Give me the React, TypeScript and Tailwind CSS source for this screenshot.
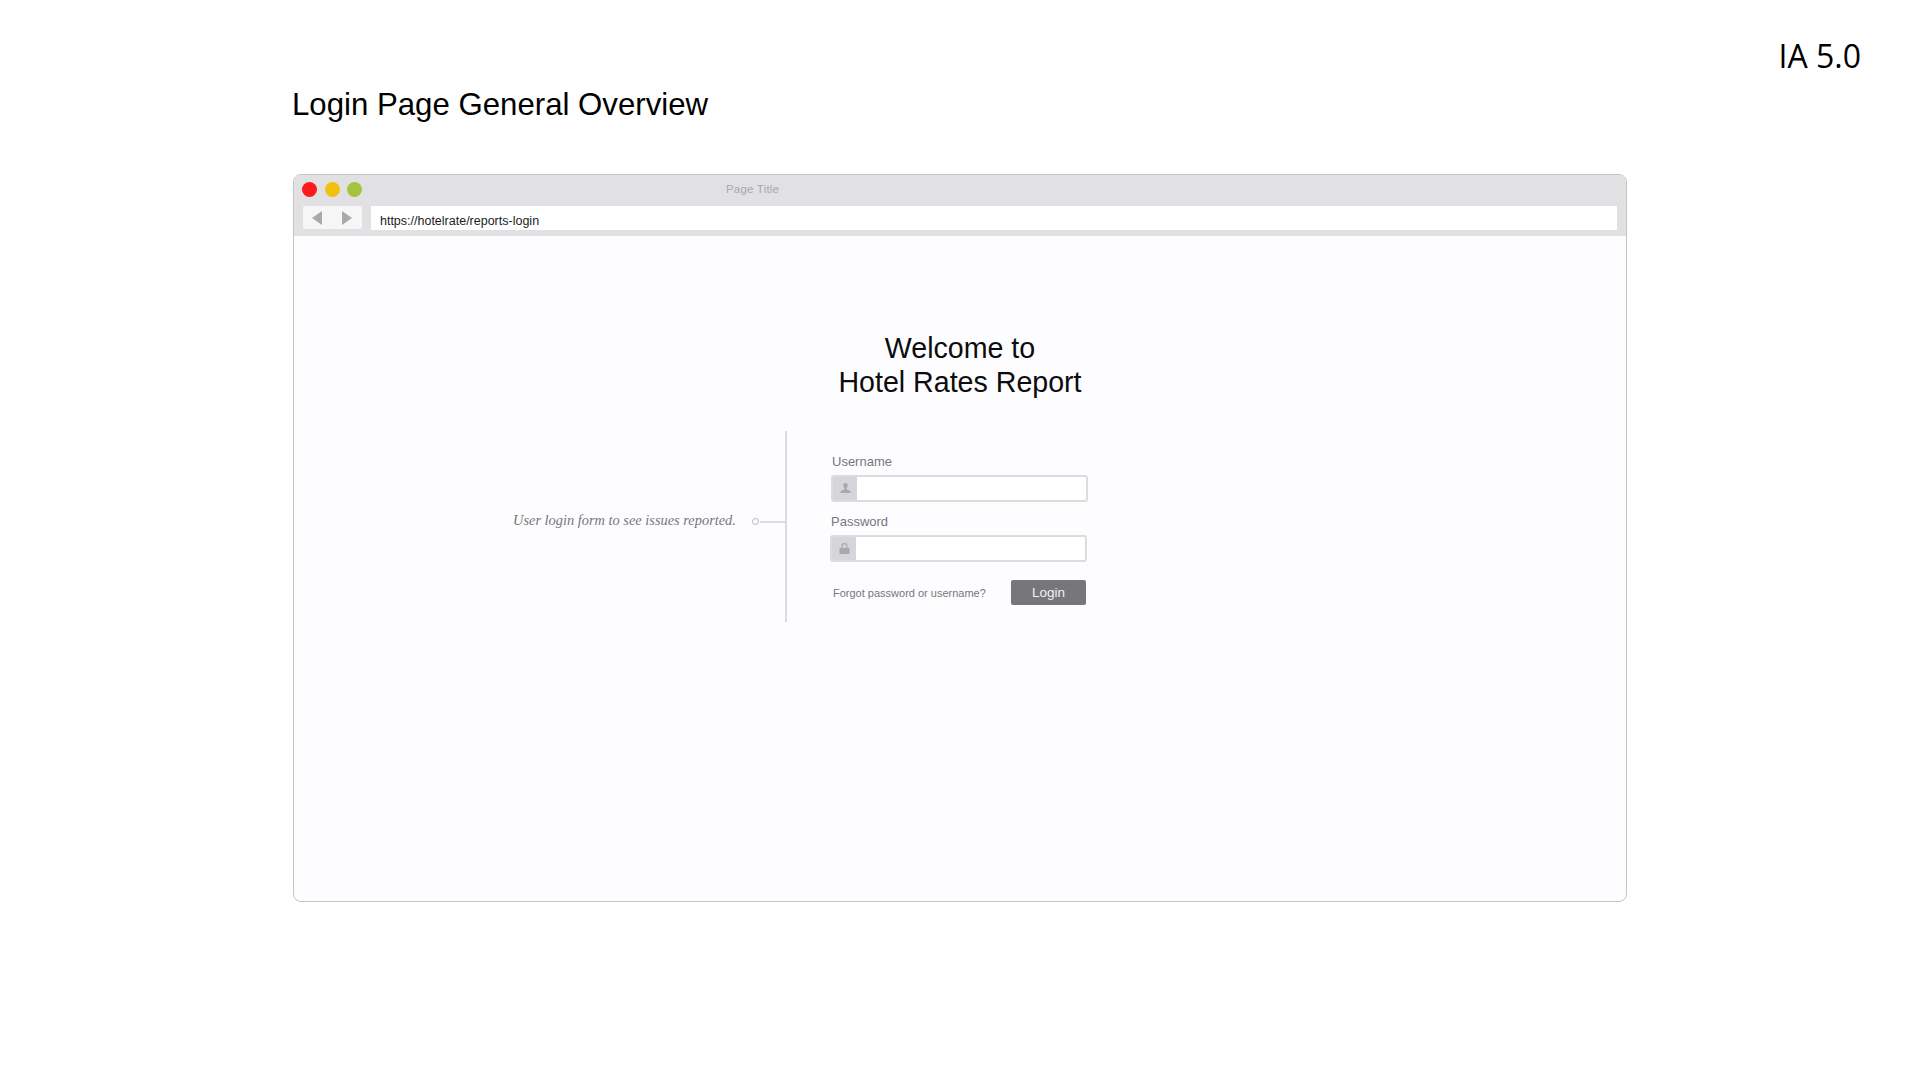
const sans = "font-['Liberation_Sans',Arial,sans-serif]";

function TextField({ icon, className }: { icon: React.ReactNode; className: string }) {
  return (
    <div className={`flex h-[27px] w-[257px] rounded-[3px] border-2 border-[#dcdbde] bg-white overflow-hidden ${className}`}>
      <div className="flex w-[24px] items-center justify-center bg-[#d6d5da] text-[#a9a8ad]">{icon}</div>
    </div>
  );
}

function UserIcon() {
  return (
    <svg width="11" height="11" viewBox="0 0 11 11" fill="currentColor">
      <path d="M5.5 0C4 0 3.3 1 3.3 2.4c0 1 .4 2 1.1 2.6v1.2L.5 8.2V10h10V8.2L6.6 6.2V5c.7-.6 1.1-1.600 1.100-2.600C7.700 1 7 0 5.500 0z" />
    </svg>
  );
}

function LockIcon() {
  return (
    <svg width="11" height="12" viewBox="0 0 11 12" fill="currentColor">
      <path d="M5.500 0C3.700 0 2.500 1.200 2.500 3v2H.500v6h10V5h-2V3c0-1.800-1.200-3-3-3zm0 1.200C6.600 1.200 7.300 2 7.300 3v2H3.700V3c0-1 .7-1.800 1.800-1.800z" />
    </svg>
  );
}

export default function App() {
  return (
    <div className={`relative h-[1080px] w-[1920px] overflow-hidden bg-white ${sans}`}>
      <div className="absolute right-[59px] top-[34px] font-['Open_Sans',sans-serif] text-[32px] leading-[44px] text-black">
        IA 5.0
      </div>

      <div className="pl-[292px] pt-[85px]">
        <h1 className="text-[31.2px] leading-[40px] text-black">Login Page General Overview</h1>

        {/* browser window */}
        <div className="ml-px mt-[49px] h-[728px] w-[1334px] overflow-hidden rounded-[8px] border border-[#c4c4c6] bg-[#fdfdff]">
          <div className="h-[61px] bg-[#e1e0e2] px-[9px] pt-[5px]">
            <div className="relative flex h-[19px] items-center gap-[7px]">
              <span className="-ml-px mr-px h-[15px] w-[15px] rounded-full bg-[#ff1a1a]" />
              <span className="h-[15px] w-[15px] rounded-full bg-[#f0c20f]" />
              <span className="h-[15px] w-[15px] rounded-full bg-[#a3c43c]" />
              <span className="absolute left-[423px] top-[1px] text-[11.5px] leading-[16px] tracking-[0.2px] text-[#a9a8ab]">
                Page Title
              </span>
            </div>
            <div className="mt-[7px] flex gap-[9px]">
              <div className="flex h-[23px] w-[59px] items-center gap-[20px] rounded-[2px] bg-[#f6f6f7] pl-[9px]">
                <svg width="10" height="14" viewBox="0 0 10 14" className="text-[#a9a8ad]">
                  <path d="M10 0v14L0 7z" fill="currentColor" />
                </svg>
                <svg width="10" height="14" viewBox="0 0 10 14" className="text-[#a9a8ad]">
                  <path d="M0 0v14l10-7z" fill="currentColor" />
                </svg>
              </div>
              <div className="h-[24px] w-[1247px] bg-white pl-[9px] pt-[6px] text-[12.5px] leading-[18px] text-[#1c1c1e]">
                https://hotelrate/reports-login
              </div>
            </div>
          </div>

          <div className="pt-[95px] text-center text-[28.6px] leading-[34px] text-[#0c0c0d]">
            <div>Welcome to</div>
            <div>Hotel Rates Report</div>
          </div>

          {/* annotation + form */}
          <div className="mt-[32px] flex h-[191px]">
            <div className="relative flex w-[491px] items-center pb-[10px] pl-[219px]">
              <span className="-mt-[3px] w-[240px] whitespace-nowrap font-['Liberation_Serif',serif] text-[14.4px] italic leading-[20px] text-[#77767b]">
                User login form to see issues reported.
              </span>
              <span className="-ml-px mr-px h-[7px] w-[7px] shrink-0 rounded-full border border-[#b5b4b8]" />
              <span className="h-[2px] w-[25px] shrink-0 bg-[#dcdbde]" />
            </div>
            <div className="w-[2px] bg-[#dcdbde]" />
            <div className="pl-[43px] pt-[22px]">
              <div className="ml-[2px] text-[13px] leading-[18px] text-[#77767b]">Username</div>
              <TextField className="ml-px mt-[4px]" icon={<UserIcon />} />
              <div className="ml-px mt-[11px] text-[13px] leading-[18px] text-[#77767b]">Password</div>
              <TextField className="mt-[4px]" icon={<LockIcon />} />
              <div className="mt-[18px] flex w-[256px] items-center justify-between">
                <span className="ml-[3px] text-[11px] leading-[16px] text-[#77767b]">Forgot password or username?</span>
                <span className="flex h-[25px] w-[75px] items-center justify-center rounded-[2px] bg-[#77767b] pt-px text-[13.5px] text-[#f2f2f3]">
                  Login
                </span>
              </div>
            </div>
          </div>
        </div>
      </div>
    </div>
  );
}
